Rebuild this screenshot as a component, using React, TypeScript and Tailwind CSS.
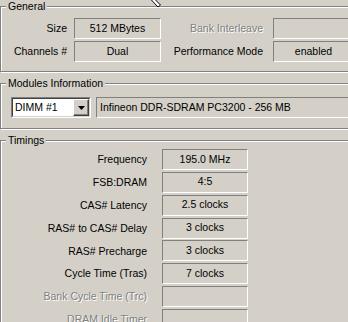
import React from "react";

const BG = "bg-[#d4d0c8]";

function Group({ title, className, children }: { title: string; className?: string; children?: React.ReactNode }) {
  return (
    <div
      className={`relative w-[380px] shrink-0 border border-[#808080] shadow-[inset_1px_1px_0_#ffffff,1px_1px_0_#ffffff] ${className ?? ""}`}
    >
      <span className={`absolute left-[5px] top-[-7px] px-[2px] ${BG} leading-[13px] whitespace-nowrap`}>{title}</span>
      {children}
    </div>
  );
}

function Field({ value, className }: { value?: string; className?: string }) {
  return (
    <div
      className={`h-[21px] shrink-0 border border-t-[#808080] border-l-[#808080] border-b-white border-r-white flex items-center justify-center whitespace-nowrap text-black ${className ?? ""}`}
    >
      {value}
    </div>
  );
}

function Label({ text, disabled, className }: { text: string; disabled?: boolean; className?: string }) {
  return (
    <div
      className={`shrink-0 text-right whitespace-nowrap ${
        disabled ? "text-[#808080] [text-shadow:1px_1px_0_#ffffff]" : "text-black"
      } ${className ?? ""}`}
    >
      {text}
    </div>
  );
}

const timings: { label: string; value: string; disabled?: boolean }[] = [
  { label: "Frequency", value: "195.0 MHz" },
  { label: "FSB:DRAM", value: "4:5" },
  { label: "CAS# Latency", value: "2.5 clocks" },
  { label: "RAS# to CAS# Delay", value: "3 clocks" },
  { label: "RAS# Precharge", value: "3 clocks" },
  { label: "Cycle Time (Tras)", value: "7 clocks" },
  { label: "Bank Cycle Time (Trc)", value: "", disabled: true },
  { label: "DRAM Idle Timer", value: "", disabled: true },
];

export default function App() {
  return (
    <div
      className={`relative w-[348px] h-[322px] overflow-hidden ${BG} font-['Liberation_Sans',Arial,sans-serif] text-[10.5px] text-black pt-[6px] flex flex-col`}
    >
      {/* General */}
      <Group title="General" className="h-[66px] pt-[11px]">
        <div className="flex flex-col gap-[2px]">
          <div className="flex items-center">
            <Label text="Size" className="w-[66px]" />
            <Field value="512 MBytes" className="ml-[7px] w-[87px]" />
            <Label text="Bank Interleave" disabled className="w-[102px]" />
            <Field className="ml-[10px] w-[81px]" />
          </div>
          <div className="flex items-center">
            <Label text="Channels #" className="w-[66px]" />
            <Field value="Dual" className="ml-[7px] w-[87px]" />
            <Label text="Performance Mode" className="w-[102px]" />
            <Field value="enabled" className="ml-[10px] w-[81px]" />
          </div>
        </div>
      </Group>

      {/* Modules Information */}
      <Group title="Modules Information" className="mt-[11px] h-[46px] pt-[13px] pl-[10px]">
        <div className="flex items-center">
          <div className="w-[80px] h-[21px] shrink-0 border border-t-[#808080] border-l-[#808080] border-b-white border-r-white">
            <div className="w-full h-full border border-t-[#404040] border-l-[#404040] border-b-[#d4d0c8] border-r-[#d4d0c8] bg-white flex items-center">
              <span className="flex-1 pl-[2px] whitespace-nowrap">DIMM #1</span>
              <div className="w-[16px] h-full border border-t-[#ffffff] border-l-[#ffffff] border-b-[#404040] border-r-[#404040] bg-[#d4d0c8] flex items-center justify-center shadow-[inset_-1px_-1px_0_#808080]">
                <svg width="7" height="4" viewBox="0 0 7 4" className="block">
                  <polygon points="0,0 7,0 3.5,4" fill="#000" />
                </svg>
              </div>
            </div>
          </div>
          <div className="ml-[5px] w-[270px] h-[21px] shrink-0 border border-t-[#808080] border-l-[#808080] border-b-white border-r-white flex items-center pl-[3px] whitespace-nowrap">
            Infineon DDR-SDRAM PC3200 - 256 MB
          </div>
        </div>
      </Group>

      {/* Timings */}
      <Group title="Timings" className="mt-[11px] h-[200px] pt-[8px]">
        <div className="flex flex-col gap-[1.857px]">
          {timings.map((t) => (
            <div key={t.label} className="flex items-center">
              <Label text={t.label} disabled={t.disabled} className="w-[146px] pt-px" />
              <Field value={t.value} className="ml-[15px] w-[86px]" />
            </div>
          ))}
        </div>
      </Group>

      {/* mouse cursor tail */}
      <svg className="absolute left-[148px] top-0" width="16" height="8" viewBox="0 0 16 8">
        <polygon points="2.5,-1 6.5,-1 12.5,5 10,7" fill="#ffffff" stroke="#000000" strokeWidth="1" />
      </svg>
    </div>
  );
}
